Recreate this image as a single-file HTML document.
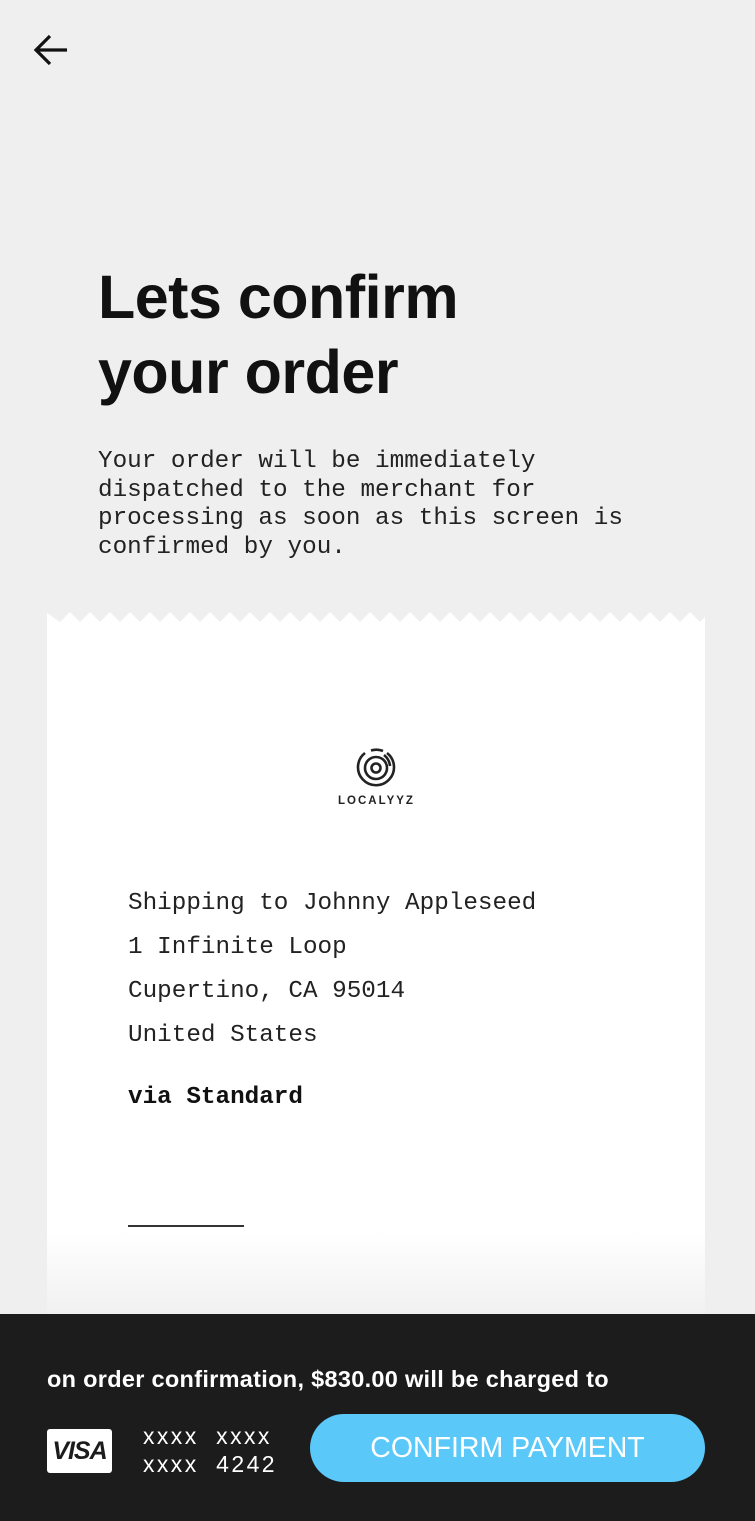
<!DOCTYPE html>
<html><head><meta charset="utf-8"><style>
body{margin:0;width:755px;height:1521px;background:#efefef;position:relative;overflow:hidden;font-family:"Liberation Sans",sans-serif}
.abs{position:absolute}
h1{position:absolute;left:98px;top:260px;margin:0;font-size:61px;line-height:75px;font-weight:bold;color:#111;letter-spacing:-0.5px}
.sub{left:98px;top:448px;font-family:"Liberation Mono",monospace;font-size:24.3px;line-height:28.5px;color:#222;white-space:pre}
.card{left:47px;top:622px;width:658px;height:700px;background:linear-gradient(#fff 0,#fff 610px,#efefef 700px)}
.addr{left:128px;top:882px;font-family:"Liberation Mono",monospace;font-size:24.3px;line-height:44px;color:#222;white-space:pre}
.bar{left:0;top:1314px;width:755px;height:207px;background:#1c1c1c}
</style></head><body>
<svg class="abs" style="left:33px;top:33px" width="36" height="34" viewBox="0 0 36 34"><path d="M34 17H4M17 3L3 17L17 31" fill="none" stroke="#111" stroke-width="3.2"/></svg>
<h1>Lets confirm<br>your order</h1>
<div class="abs sub">Your order will be immediately
dispatched to the merchant for
processing as soon as this screen is
confirmed by you.</div>
<svg class="abs" style="left:47px;top:610px" width="658" height="14" viewBox="0 0 658 14"><polygon id="zz" fill="#fff" points=""/></svg>
<div class="abs card"></div>
<svg class="abs" style="left:354px;top:746px" width="44" height="44" viewBox="0 0 44 44" fill="none" stroke="#222" stroke-width="2.6"><path d="M11 7A18 18 0 1 0 33 7M17 4.5A18 18 0 0 1 29 5"/><circle cx="22" cy="22" r="11"/><circle cx="22" cy="22" r="4.5"/><path d="M30 9A16 16 0 0 1 36 20"/></svg>
<div class="abs" style="left:320px;top:795px;width:113px;text-align:center;font-size:11.5px;font-weight:bold;letter-spacing:2px;color:#222">LOCALYYZ</div>
<div class="abs addr">Shipping to Johnny Appleseed
1 Infinite Loop
Cupertino, CA 95014
United States</div>
<div class="abs" style="left:128px;top:1084px;font-family:'Liberation Mono',monospace;font-size:24.3px;font-weight:bold;color:#111">via Standard</div>
<div class="abs" style="left:128px;top:1225px;width:116px;height:1.5px;background:#333"></div>
<div class="abs bar"></div>
<div class="abs" style="left:47px;top:1366px;font-size:23.5px;color:#fff;font-weight:bold;letter-spacing:0.3px">on order confirmation, $830.00 will be charged to</div>
<div class="abs" style="left:47px;top:1429px;width:65px;height:44px;background:#fff;border-radius:3px;text-align:center;font:italic 900 25px/44px 'Liberation Sans',sans-serif;color:#1c1c1c;letter-spacing:-1px">VISA</div>
<div class="abs" style="left:143px;top:1422px;font-size:23px;line-height:28px;color:#fff;letter-spacing:2.4px;white-space:pre">xxxx  xxxx
xxxx  4242</div>
<div class="abs" style="left:310px;top:1414px;width:395px;height:68px;border-radius:34px;background:#5ac8f8;color:#fff;text-align:center;font-size:28.5px;line-height:68px">CONFIRM PAYMENT</div>
<script>
var p="0,14 0,3";for(var x=3;x<658;x+=20){p+=" "+(x+10)+",12 "+(x+20)+",2";}p+=" 658,14";document.getElementById('zz').setAttribute('points',p);
</script>
</body></html>
